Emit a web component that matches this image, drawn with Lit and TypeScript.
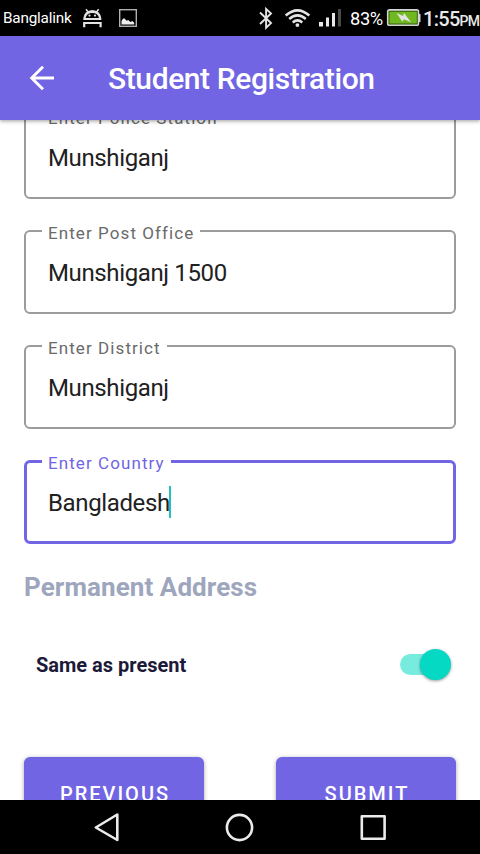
import { LitElement, html, css } from "lit";
import { customElement, property } from "lit/decorators.js";
import { classMap } from "lit/directives/class-map.js";

@customElement("status-bar")
class StatusBar extends LitElement {
  static styles = css`
    :host { display: flex; align-items: center; height: 36px; background: #000; color: #fff; white-space: nowrap; }
    .carrier { width: 82px; box-sizing: border-box; padding-left: 3px; font-size: 15.3px; letter-spacing: -0.2px; }
    .left { display: block; flex: 1; height: 36px; }
    .right { display: block; height: 36px; }
    .pct { width: 36px; font-size: 18.3px; letter-spacing: -0.35px; padding-top: 1px; }
    .clock { width: 58px; box-sizing: border-box; padding-left: 1px; font-size: 20px; font-weight: 500; letter-spacing: -0.7px; padding-top: 2px; color: #e8e8e8; }
    .ampm { font-size: 14px; letter-spacing: -0.8px; }
  `;
  render() {
    return html`
      <span class="carrier">Banglalink</span>
      <svg class="left" viewBox="82 0 176 36" width="176" height="36" preserveAspectRatio="xMinYMin">
        <path d="M83.3 20v-1.5a9 8.6 0 0 1 18 0V20z" fill="#e4e4e4"/>
        <path d="M85.6 18.1a6.8 6.2 0 0 1 13.4 0z" fill="#000"/>
        <path d="M86 9.3l2.6 3.4M98.6 9.3L96 12.7" stroke="#e4e4e4" stroke-width="1.5"/>
        <circle cx="89.5" cy="15.6" r="1.1" fill="#e4e4e4"/><circle cx="95" cy="15.6" r="1.1" fill="#e4e4e4"/>
        <path d="M84.2 27.2V23h16.4v4.2" fill="none" stroke="#e4e4e4" stroke-width="2.2"/>
        <rect x="119.7" y="9.7" width="16.6" height="16.6" fill="none" stroke="#b0b0b0" stroke-width="1.4"/>
        <path d="M121.5 24.6v-3.6l1.6-2.6 1.5.2 2 2.1 1.6-.6 2.2 1.9 2-.9 1.8 1.6v1.9z" fill="#eee"/>
      </svg>
      <svg class="right" viewBox="258 0 92 36" width="92" height="36">
        <path d="M260 12.5l11 10.6-4.9 4.6V9l4.9 4.4L260 24" fill="none" stroke="#e4e4e4" stroke-width="1.9"/>
        <g fill="none" stroke="#e4e4e4" stroke-width="2.6">
          <path d="M285.7 15.5q11.8-10.4 23.6 0"/>
          <path d="M289.2 19q8.3-7.2 16.6 0"/>
          <path d="M292.7 22.4q4.8-3.9 9.6 0"/>
        </g>
        <circle cx="297.4" cy="25.1" r="1.9" fill="#e4e4e4"/>
        <path d="M319 22h4v4.5h-4zM326 17.5h3v9h-3zM332 13h3v13.5h-3z" fill="#e8e8e8"/>
        <path d="M338 9h3v17.5h-3z" fill="#4a4a4a"/>
      </svg>
      <span class="pct">83%</span>
      <svg class="right" viewBox="386 0 36 36" width="36" height="36">
        <rect x="387.8" y="10" width="30.6" height="15.2" rx="1.8" fill="#70b820" stroke="#d4d4d4" stroke-width="1.8"/>
        <rect x="389" y="11.2" width="28.2" height="12.8" fill="none" stroke="#274a08" stroke-width=".8"/>
        <path d="M419 14h1.5v8H419z" fill="#d4d4d4"/>
        <path d="M396.5 13l6.5 3 1-3 7 9.3-7.2-3-1.4 2.5z" fill="#e4e4e4"/>
      </svg>
      <span class="clock">1:55<span class="ampm">PM</span></span>
    `;
  }
}

@customElement("outlined-field")
class OutlinedField extends LitElement {
  @property() label = "";
  @property() value = "";
  @property({ type: Boolean }) focused = false;
  static styles = css`
    :host { display: block; }
    .box { position: relative; box-sizing: border-box; height: 84px; border: 2px solid #9b9b9b; border-radius: 6px; display: flex; align-items: center; padding: 0 22px; color: #212121; font-size: 24px; letter-spacing: -0.37px; }
    .box.focused { border: 3px solid #7165e3; padding: 0 21px; }
    .label { position: absolute; left: 16px; top: -10px; padding: 0 6px; background: #fff; font-size: 17px; line-height: 22px; letter-spacing: 1.08px; color: #6a6a6a; white-space: nowrap; }
    .focused .label { left: 15px; top: -11px; color: #7165e3; }
    .value { padding-top: 2px; }
    .caret { width: 2px; height: 32px; background: #22bfc4; margin-left: -0.5px; }
  `;
  render() {
    return html`<div class=${classMap({ box: true, focused: this.focused })}>
      <span class="label">${this.label}</span><span class="value">${this.value}</span>
      ${this.focused ? html`<span class="caret"></span>` : ""}
    </div>`;
  }
}

@customElement("app-root")
class AppRoot extends LitElement {
  static styles = css`
    :host { display: flex; flex-direction: column; width: 480px; height: 854px; overflow: hidden; background: #fff; font-family: Roboto, sans-serif; }
    .bar { position: relative; z-index: 1; flex: none; height: 84px; display: flex; align-items: center; background: #7165e3; color: #fff; box-shadow: 0 1px 4px rgba(0, 0, 0, 0.4); }
    .back { display: block; width: 84px; height: 84px; margin-right: 24px; }
    .title { font-size: 30px; font-weight: 500; line-height: 36px; letter-spacing: -0.4px; padding-top: 2px; white-space: nowrap; }
    .body { flex: 1; min-height: 0; overflow: hidden; padding: 0 24px; }
    .fields { display: flex; flex-direction: column; gap: 31px; margin-top: -5px; }
    .heading { margin: 26px 0 0; height: 34px; line-height: 34px; font-size: 26px; font-weight: 700; letter-spacing: 0.08px; color: #9ea6be; }
    .row { display: flex; align-items: center; justify-content: space-between; margin-top: 37px; padding: 0 4px 0 12px; height: 48px; }
    .same { font-size: 20px; font-weight: 700; color: #1c1a38; }
    .switch { display: flex; align-items: center; justify-content: flex-end; width: 52px; height: 32px; padding-bottom: 2px; }
    .track { width: 36px; height: 21px; margin-right: -16px; border-radius: 11px; background: #78ebdf; }
    .thumb { width: 31px; height: 31px; margin-right: 1px; border-radius: 50%; background: #05d8c3; box-shadow: 0 1px 3px rgba(0, 0, 0, 0.4); }
    .actions { display: flex; justify-content: space-between; margin-top: 68px; }
    .button { box-sizing: border-box; width: 180px; height: 72px; padding-left: 2px; border-radius: 6px; background: #7165e3; color: #fff; font-size: 20px; font-weight: 500; line-height: 74px; letter-spacing: 2px; text-align: center; box-shadow: 0 1px 4px rgba(0, 0, 0, 0.35); }
    .nav { position: relative; flex: none; display: block; width: 480px; height: 54px; background: #000; }
  `;
  private fields = [
    { label: "Enter Police Station", value: "Munshiganj" },
    { label: "Enter Post Office", value: "Munshiganj 1500" },
    { label: "Enter District", value: "Munshiganj" },
    { label: "Enter Country", value: "Bangladesh", focused: true },
  ];
  render() {
    return html`
      <status-bar></status-bar>
      <div class="bar">
        <svg class="back" viewBox="0 36 84 84"><path d="M54 78H32M43 66.7L31.7 78 43 89.3" fill="none" stroke="#fff" stroke-width="2.9"/></svg>
        <span class="title">Student Registration</span>
      </div>
      <div class="body">
        <div class="fields">
          ${this.fields.map((f) => html`<outlined-field .label=${f.label} .value=${f.value} .focused=${!!f.focused}></outlined-field>`)}
        </div>
        <h2 class="heading">Permanent Address</h2>
        <div class="row">
          <span class="same">Same as present</span>
          <span class="switch"><span class="track"></span><span class="thumb"></span></span>
        </div>
        <div class="actions">
          <div class="button">PREVIOUS</div>
          <div class="button">SUBMIT</div>
        </div>
      </div>
      <svg class="nav" viewBox="0 800 480 54" fill="none" stroke="#ebebeb" stroke-width="2.6" stroke-linejoin="round">
        <path d="M117.3 814.5v25.5L95.8 827.5z"/>
        <circle cx="239.5" cy="827.5" r="12.6"/>
        <rect x="361.8" y="816.3" width="22.8" height="22.4"/>
      </svg>
    `;
  }
}
